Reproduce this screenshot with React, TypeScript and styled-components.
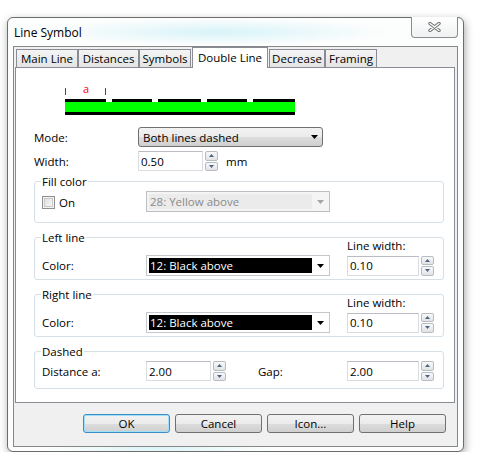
import React from 'react'
import styled, { createGlobalStyle, css } from 'styled-components'

const GlobalStyle = createGlobalStyle`
  * {
    box-sizing: border-box;
  }
  html,
  body {
    margin: 0;
    padding: 0;
    background: #ffffff;
  }
  body {
    font-family: "Open Sans", "Noto Sans", "Liberation Sans", sans-serif;
    font-size: 11.5px;
    color: #000;
  }
`

// window chrome
const Window = styled.div`
  margin: 17px 0 0 7px;
  width: 457px;
  height: 435px;
  display: flex;
  flex-direction: column;
  padding: 0 5px 4px;
  border: 1px solid #6c6c6c;
  border-radius: 6px;
  background:
    radial-gradient(ellipse 170px 13px at 210px 14px, rgba(186, 236, 244, 0.55), transparent),
    radial-gradient(ellipse 110px 8px at 150px 430px, rgba(196, 238, 240, 0.6), transparent),
    #fcfdfd;
  box-shadow: 1px 3px 9px rgba(0, 0, 0, 0.35);
`

const TitleBar = styled.div`
  height: 28px;
  display: flex;
  align-items: flex-start;
`

const Title = styled.span`
  align-self: center;
  padding-left: 1px;
  font-size: 12px;
`

const CloseButton = styled.div`
  margin: -1px 0 0 auto;
  width: 47px;
  height: 21px;
  border: 1px solid #8c8c8c;
  border-top: none;
  border-radius: 0 0 4px 4px;
  background: linear-gradient(#ffffff, #eff1f2);
  display: flex;
  align-items: center;
  justify-content: center;
`

const Client = styled.div`
  flex: 1;
  display: flex;
  flex-direction: column;
  border: 1px solid #878787;
  background: #f0f0f0;
  padding: 0 2px 0 1px;
`

// tabs
const TabStrip = styled.div`
  display: flex;
  align-items: flex-end;
  height: 20px;
  margin-left: 1px;
`

const Tab = styled.div<{ $w: number; $active?: boolean }>`
  width: ${(p) => p.$w}px;
  height: 18px;
  display: flex;
  align-items: center;
  justify-content: center;
  border: 1px solid #898c95;
  border-bottom: none;
  background: linear-gradient(#f4f4f4, #e4e4e4);
  white-space: nowrap;
  ${(p) =>
    p.$active &&
    css`
      position: relative;
      z-index: 1;
      height: 21px;
      margin: 0 1px -1px;
      padding-bottom: 2px;
      background: #ffffff;
    `}
`

const Panel = styled.div`
  height: 336px;
  flex-shrink: 0;
  border: 1px solid #898c95;
  background: #ffffff;
  display: flex;
  flex-direction: column;
  padding-left: 18px;

  & > * {
    flex-shrink: 0;
  }
`

const Preview = styled.svg`
  display: block;
  margin: 14px 0 0 26px;
`

const FormRow = styled.div<{ $mt: number }>`
  display: grid;
  grid-template-columns: 104px auto;
  align-items: center;
  height: 20px;
  margin-top: ${(p) => p.$mt}px;
`

const Inline = styled.div`
  display: flex;
  align-items: center;
  gap: 8px;
`

// group boxes
const Group = styled.div<{ $cols: string; $pb: number; $mt: number }>`
  width: 410px;
  margin-top: ${(p) => p.$mt}px;
  border: 1px solid #d5dfe5;
  border-radius: 3px;
  padding: 0 0 ${(p) => p.$pb}px 7px;
  display: grid;
  grid-template-columns: ${(p) => p.$cols};
  row-gap: 2px;
  align-items: center;
`

const Legend = styled.span<{ $span: string }>`
  grid-row: 1;
  grid-column: ${(p) => p.$span};
  justify-self: start;
  align-self: start;
  margin: -8px 0 0 -1px;
  padding: 0 1px;
  line-height: 15px;
  background: #ffffff;
`

const HeadLabel = styled.span<{ $col: number }>`
  grid-row: 1;
  grid-column: ${(p) => p.$col};
  line-height: 15px;
`

const Cell = styled.div<{ $col?: number }>`
  ${(p) => p.$col && `grid-column: ${p.$col};`}
`

// combo boxes
const ModeCombo = styled.div`
  width: 185px;
  height: 20px;
  display: flex;
  align-items: center;
  justify-content: space-between;
  padding: 0 4px 0 4px;
  border: 1px solid #707070;
  border-radius: 3px;
  background: linear-gradient(#f2f2f2, #ebebeb 50%, #dddddd 51%, #cfcfcf);
`

const ColorCombo = styled.div<{ $disabled?: boolean }>`
  width: 184px;
  height: 21px;
  display: flex;
  align-items: stretch;
  padding: 2px 0 2px 2px;
  border: 1px solid ${(p) => (p.$disabled ? '#bcbfc3' : '#c4c7cc')};
  background: ${(p) => (p.$disabled ? '#f4f4f4' : '#ffffff')};
`

const Swatch = styled.div<{ $disabled?: boolean }>`
  width: 163px;
  display: flex;
  align-items: center;
  padding-left: 1px;
  white-space: nowrap;
  ${(p) =>
    p.$disabled
      ? css`
          background: #ebebeb;
          color: #8a8a8a;
        `
      : css`
          background: #000000;
          color: #ffffff;
        `}
`

const ArrowBox = styled.div`
  flex: 1;
  display: flex;
  align-items: center;
  justify-content: center;
`

// numeric fields with up/down buttons
const SpinWrap = styled.div`
  display: flex;
  align-items: stretch;
  gap: 2px;
  height: 20px;
`

const NumField = styled.div<{ $w: number }>`
  width: ${(p) => p.$w}px;
  display: flex;
  align-items: center;
  padding-left: 2px;
  border: 1px solid #d9dde2;
  border-top-color: #b9bdc3;
  background: #ffffff;
`

const SpinButtons = styled.div`
  width: 13px;
  display: flex;
  flex-direction: column;
  gap: 1px;
`

const SpinHalf = styled.div`
  flex: 1;
  display: flex;
  align-items: center;
  justify-content: center;
  border: 1px solid #b7bbc2;
  border-radius: 2px;
  background: linear-gradient(#f8f8f8, #e1e3e6);
`

const CheckBox = styled.div`
  width: 13px;
  height: 13px;
  border: 1px solid #8e8f8f;
  background: linear-gradient(135deg, #dcdcdc, #fbfbfb);
  box-shadow: inset 0 0 0 1px #f4f4f4, inset 0 0 0 2px #c8c8c8;
`

const CheckRow = styled.div`
  display: flex;
  align-items: center;
  gap: 4px;
  padding-top: 2px;
`

// dialog buttons
const ButtonRow = styled.div`
  display: flex;
  justify-content: flex-end;
  gap: 5px;
  padding: 11px 9px 0 0;
`

const Button = styled.div<{ $default?: boolean }>`
  width: 87px;
  height: 19px;
  display: flex;
  align-items: center;
  justify-content: center;
  border: 1px solid #707070;
  border-radius: 3px;
  background: linear-gradient(#f2f2f2, #ebebeb 50%, #dddddd 51%, #cfcfcf);
  ${(p) =>
    p.$default &&
    css`
      border-color: #3c8cc8;
      box-shadow: inset 0 0 0 1px #9fe0f8;
    `}
`

const Caret = ({ color = '#000' }: { color?: string }) => (
  <svg width="7" height="4" viewBox="0 0 7 4">
    <path d="M0 0h7L3.5 4z" fill={color} />
  </svg>
)

const SpinArrow = ({ up }: { up?: boolean }) => (
  <svg width="5" height="3" viewBox="0 0 5 3">
    <path d={up ? 'M0 3h5L2.5 0z' : 'M0 0h5L2.5 3z'} fill="#4f6286" />
  </svg>
)

const SpinBox = ({ value, width }: { value: string; width: number }) => (
  <SpinWrap>
    <NumField $w={width}>{value}</NumField>
    <SpinButtons>
      <SpinHalf>
        <SpinArrow up />
      </SpinHalf>
      <SpinHalf>
        <SpinArrow />
      </SpinHalf>
    </SpinButtons>
  </SpinWrap>
)

const ColorSelect = ({ text, disabled }: { text: string; disabled?: boolean }) => (
  <ColorCombo $disabled={disabled}>
    <Swatch $disabled={disabled}>{text}</Swatch>
    <ArrowBox>
      <Caret color={disabled ? '#a4a4a4' : '#000'} />
    </ArrowBox>
  </ColorCombo>
)

const tabs = [
  { name: 'Main Line', w: 62 },
  { name: 'Distances', w: 61 },
  { name: 'Symbols', w: 52 },
  { name: 'Double Line', w: 76, active: true },
  { name: 'Decrease', w: 56 },
  { name: 'Framing', w: 52 },
]

// top dashes of the double line preview
const dashes = [
  [5, 46],
  [52, 92],
  [98, 141],
  [147, 187],
  [193, 235],
]

const LinePreview = () => (
  <Preview width="240" height="36" viewBox="0 0 240 36">
    <rect x="5" y="6" width="1" height="7" fill="#ff0000" />
    <rect x="45" y="6" width="1" height="7" fill="#ff0000" />
    <text x="23" y="11" fontSize="11" fill="#ff0000" fontFamily="Open Sans, sans-serif">
      a
    </text>
    {dashes.map(([a, b]) => (
      <rect key={a} x={a} y="17" width={b - a} height="3" fill="#000" />
    ))}
    <rect x="5" y="20" width="230" height="10" fill="#00ff00" />
    <rect x="5" y="30" width="230" height="3" fill="#000" />
  </Preview>
)

const LineGroup = ({ title }: { title: string }) => (
  <Group $cols="104px 184px 17px auto" $pb={3} $mt={14}>
    <Legend $span="1 / 3">{title}</Legend>
    <HeadLabel $col={4}>Line width:</HeadLabel>
    <Cell $col={1}>Color:</Cell>
    <ColorSelect text="12: Black above" />
    <Cell $col={4}>
      <SpinBox value="0.10" width={72} />
    </Cell>
  </Group>
)

export default function App() {
  return (
    <>
      <GlobalStyle />
      <Window>
        <TitleBar>
          <Title>Line Symbol</Title>
          <CloseButton>
            <svg width="13" height="10" viewBox="0 0 13 10">
              <path d="M2 1.5L11 8.5M11 1.5L2 8.5" stroke="#6f6f6f" strokeWidth="3.4" strokeLinecap="round" />
              <path d="M2 1.5L11 8.5M11 1.5L2 8.5" stroke="#ffffff" strokeWidth="1.4" strokeLinecap="round" />
            </svg>
          </CloseButton>
        </TitleBar>
        <Client>
          <TabStrip>
            {tabs.map((t) => (
              <Tab key={t.name} $w={t.w} $active={t.active}>
                {t.name}
              </Tab>
            ))}
          </TabStrip>
          <Panel>
            <LinePreview />
            <FormRow $mt={9}>
              <Cell>Mode:</Cell>
              <ModeCombo>
                <span>Both lines dashed</span>
                <Caret />
              </ModeCombo>
            </FormRow>
            <FormRow $mt={4}>
              <Cell>Width:</Cell>
              <Inline>
                <SpinBox value="0.50" width={65} />
                <span>mm</span>
              </Inline>
            </FormRow>
            <Group $cols="104px auto" $pb={10} $mt={10}>
              <Legend $span="1 / -1">Fill color</Legend>
              <CheckRow>
                <CheckBox />
                <span>On</span>
              </CheckRow>
              <ColorSelect text="28: Yellow above" disabled />
            </Group>
            <LineGroup title="Left line" />
            <LineGroup title="Right line" />
            <Group $cols="104px 80px 32px 89px auto" $pb={7} $mt={14}>
              <Legend $span="1 / -1">Dashed</Legend>
              <Cell $col={1}>Distance a:</Cell>
              <SpinBox value="2.00" width={66} />
              <span />
              <Cell>Gap:</Cell>
              <SpinBox value="2.00" width={72} />
            </Group>
          </Panel>
          <ButtonRow>
            <Button $default>OK</Button>
            <Button>Cancel</Button>
            <Button>Icon...</Button>
            <Button>Help</Button>
          </ButtonRow>
        </Client>
      </Window>
    </>
  )
}
